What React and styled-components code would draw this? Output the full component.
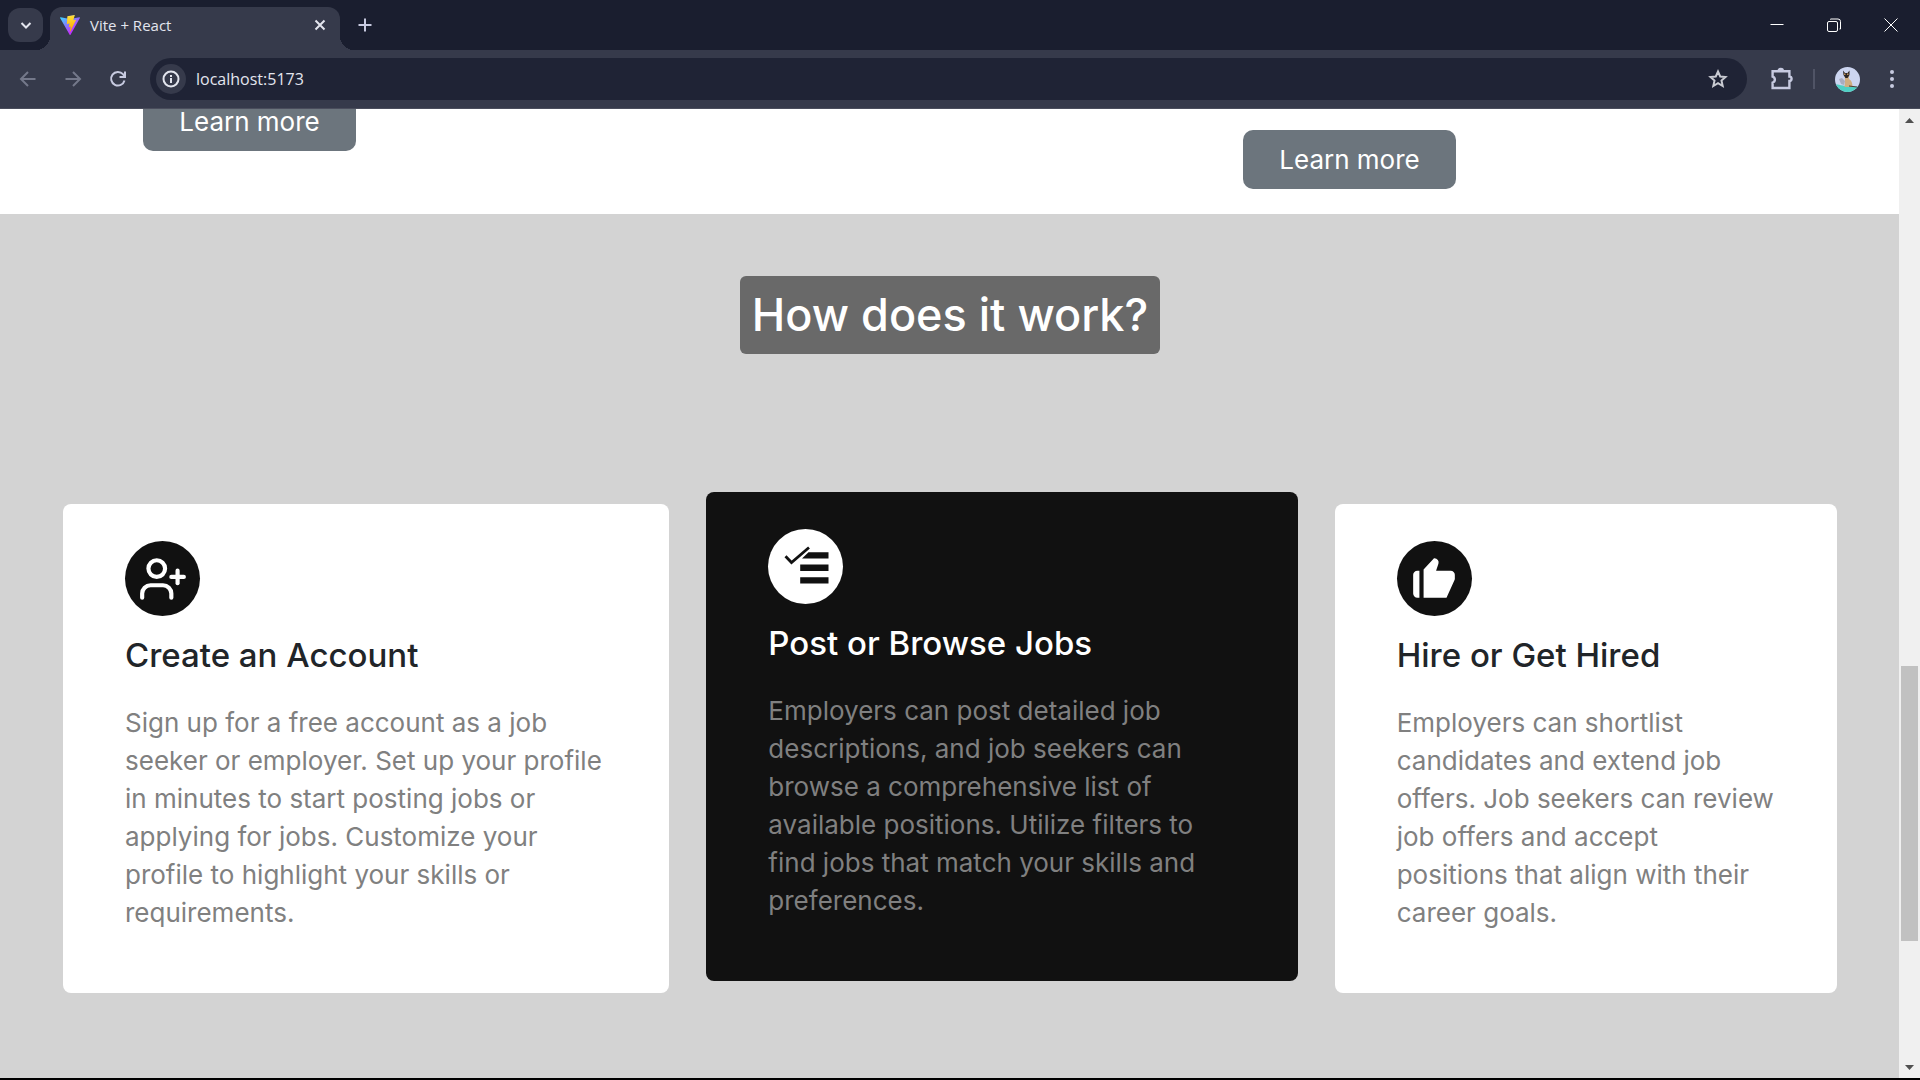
import React from "react";
import styled, { createGlobalStyle, css } from "styled-components";
import { UserPlus } from "lucide-react";
import { BiSolidLike } from "react-icons/bi";

const GlobalStyle = createGlobalStyle`
  *, *::before, *::after { box-sizing: border-box; }
  body { margin: 0; background: #000; }
  button, input { font: inherit; border: 0; margin: 0; padding: 0; }
  h2, h3, p { margin: 0; }
`;

const Window = styled.div`
  display: flex;
  flex-direction: column;
  min-height: 100vh;
  border-bottom: 2px solid #000;
  font-family: "Open Sans", "Noto Sans", sans-serif;
`;

const TabStrip = styled.header`
  display: flex;
  height: 50px;
  background: #1a1e2f;
  color: #e3e5ee;
`;

const TabSearch = styled.button`
  display: grid;
  place-items: center;
  width: 35px;
  height: 34px;
  margin: 8px 7px 0 8px;
  border-radius: 12px;
  background: #363a4b;
  color: #e3e5ee;
`;

const Tab = styled.div`
  position: relative;
  display: flex;
  align-items: center;
  gap: 10px;
  width: 290px;
  height: 43px;
  margin-top: 7px;
  padding: 0 10px;
  padding-bottom: 7px;
  border-radius: 12px 12px 0 0;
  background: #363a4b;
  font-size: 15px;

  &::before, &::after {
    content: "";
    position: absolute;
    bottom: 0;
    width: 14px;
    height: 14px;
  }
  &::before {
    right: 100%;
    background: radial-gradient(circle at 0 0, transparent 14px, #363a4b 14px);
  }
  &::after {
    left: 100%;
    background: radial-gradient(circle at 100% 0, transparent 14px, #363a4b 14px);
  }
`;

const TabTitle = styled.span`
  flex: 1;
`;

const IconButton = styled.button`
  display: grid;
  place-items: center;
  width: ${(p) => p.$size || 20}px;
  height: ${(p) => p.$size || 20}px;
  background: none;
  color: ${(p) => p.$color || "#c7cae0"};
`;

const NewTab = styled.div`
  padding: 10px;
`;

const WindowControls = styled.div`
  display: flex;
  margin-left: auto;
  padding-right: 1px;

  button {
    width: 57px;
    height: 50px;
  }
`;

const Toolbar = styled.nav`
  display: flex;
  align-items: center;
  height: 59px;
  padding-left: 12px;
  border-bottom: 1px solid #4a4d5c;
  background: #363a4b;
`;

const NavButtons = styled.div`
  display: flex;
  gap: 13px;
  margin-right: 16px;
`;

const AddressBar = styled.div`
  display: flex;
  flex: 1;
  align-items: center;
  height: 42px;
  padding: 0 14px 0 6px;
  border-radius: 21px;
  background: #1f2335;
`;

const SiteInfo = styled.button`
  display: grid;
  place-items: center;
  width: 30px;
  height: 30px;
  border-radius: 50%;
  background: #363a4b;
  color: #e3e5ee;
`;

const AddressInput = styled.input`
  flex: 1;
  min-width: 0;
  padding: 0 10px;
  outline: 0;
  background: none;
  color: #e3e5ee;
  font-size: 16px;
`;

const ToolbarEnd = styled.div`
  display: flex;
  align-items: center;
  padding: 0 12px 0 19px;
`;

const Divider = styled.span`
  width: 2px;
  height: 20px;
  margin: 0 19px 0 17px;
  background: #505466;
`;

const MenuWrap = styled.div`
  margin-left: 16px;
`;

const Viewport = styled.div`
  display: flex;
  flex: 1;
`;

const Page = styled.main`
  display: flex;
  flex: 1;
  flex-direction: column;
  min-width: 0;
  overflow: hidden;
  background: #fff;
  font-family: Inter, "Open Sans", sans-serif;
  font-size: 26px;
  line-height: 38px;
`;

const LearnRow = styled.section`
  display: grid;
  grid-template-columns: 1100fr 656fr;
  align-content: end;
  align-items: end;
  justify-items: start;
  height: 105px;
  padding: 0 0 25px 143px;
`;

const LearnButton = styled.button`
  width: 213px;
  height: 59px;
  margin-bottom: ${(p) => (p.$raised ? 38 : 0)}px;
  border-radius: 10px;
  background: #6c757d;
  color: #fff;
`;

const HowSection = styled.section`
  display: flex;
  flex: 1;
  flex-direction: column;
  align-items: center;
  padding: 62px 62px 85px 63px;
  background: #d3d3d3;
`;

const SectionTitle = styled.h2`
  padding: 12px;
  border-radius: 6px;
  background: #696969;
  color: #fff;
  font-size: 45px;
  font-weight: 500;
  line-height: 54px;
`;

const Cards = styled.div`
  display: grid;
  grid-template-columns: 606fr 591fr 502fr;
  gap: 37px;
  width: 100%;
  margin-top: 150px;
`;

const Card = styled.article`
  min-height: 489px;
  padding: 37px 62px 56px;
  border-radius: 8px;
  background: #fff;
  color: #212529;
  ${(p) => p.$featured && css`
    margin: -12px 0 12px;
    background: #111;
    color: #fff;
  `}
`;

const Badge = styled.div`
  display: grid;
  place-items: center;
  width: 75px;
  height: 75px;
  border-radius: 50%;
  background: ${(p) => (p.$featured ? "#fff" : "#111")};
  color: ${(p) => (p.$featured ? "#111" : "#fff")};
`;

const CardTitle = styled.h3`
  margin: 20px 0 30px;
  font-size: 33px;
  font-weight: 500;
  line-height: 38px;
`;

const CardText = styled.p`
  color: #808080;
`;

const Scrollbar = styled.div`
  display: flex;
  flex-direction: column;
  align-items: center;
  width: 21px;
  padding: 9px 0 8px;
  background: #f0f0f0;
`;

const Track = styled.div`
  display: grid;
  grid-template-rows: 543fr 275fr 124fr;
  flex: 1;
  width: 17px;
`;

const Thumb = styled.div`
  grid-row: 2;
  background: #c1c1c1;
`;

const Stroke = ({ size = 20, width = 2, children, ...rest }) => (
  <svg width={size} height={size} viewBox="0 0 20 20" fill="none" stroke="currentColor" strokeWidth={width} aria-hidden="true" {...rest}>
    {children}
  </svg>
);

const ViteLogo = () => (
  <svg width="20" height="20" viewBox="0 0 256 257" aria-hidden="true">
    <defs>
      <linearGradient id="shield" x1="-.828%" x2="57.636%" y1="7.652%" y2="78.411%">
        <stop offset="0%" stopColor="#41D1FF" />
        <stop offset="100%" stopColor="#BD34FE" />
      </linearGradient>
      <linearGradient id="bolt" x1="43.376%" x2="50.316%" y1="2.242%" y2="89.03%">
        <stop offset="0%" stopColor="#FFEA83" />
        <stop offset="8.333%" stopColor="#FFDD35" />
        <stop offset="100%" stopColor="#FFA800" />
      </linearGradient>
    </defs>
    <path fill="url(#shield)" d="M255.153 37.938L134.897 252.976c-2.483 4.44-8.862 4.466-11.382.048L.875 37.958c-2.746-4.814 1.371-10.646 6.827-9.67l120.385 21.517a6.537 6.537 0 0 0 2.322-.004l117.867-21.483c5.438-.991 9.574 4.796 6.877 9.62Z" />
    <path fill="url(#bolt)" d="M185.432.063L96.44 17.501a3.268 3.268 0 0 0-2.634 3.014l-5.474 92.456a3.268 3.268 0 0 0 3.997 3.378l24.777-5.718c2.318-.535 4.413 1.507 3.936 3.838l-7.361 36.047c-.495 2.426 1.782 4.5 4.151 3.78l15.304-4.649c2.372-.72 4.652 1.36 4.15 3.788l-11.698 56.621c-.732 3.542 3.979 5.473 5.943 2.437l1.313-2.028l72.516-144.72c1.215-2.423-.88-5.186-3.54-4.672l-25.505 4.922c-2.396.462-4.435-1.77-3.759-4.114l16.646-57.705c.677-2.35-1.37-4.583-3.769-4.113Z" />
  </svg>
);

const Avatar = () => (
  <svg width="25" height="25" viewBox="0 0 25 25" aria-hidden="true">
    <defs>
      <clipPath id="round"><circle cx="12.5" cy="12.5" r="12.5" /></clipPath>
    </defs>
    <g clipPath="url(#round)">
      <path fill="#ccd5f0" d="M0 0h25v25H0z" />
      <path fill="#a9adc0" d="M4 12l3-1 3 3-1 4-3-1z" />
      <path fill="#4fd0c4" d="M0 17.500c5-.5 9 3 25 2V25H0z" />
      <path fill="#cfae80" d="M9.500 6h4l.5 6c2.500 1.500 3.500 4 3.500 8H9.500l.5-6z" />
      <path fill="#2b2523" d="M8 3.500L10 6h2.500l2-2.500V8L12.500 11h-2L8.500 8z" />
      <path fill="#b98f5c" d="M9 6.500h1.500V8H9zM12 6.500h1.500V8H12z" />
      <path stroke="#4a3a30" strokeWidth="1" d="M14 19l8 1" />
    </g>
  </svg>
);

const ChecklistIcon = () => (
  <svg width="50" height="50" viewBox="0 0 50 50" fill="currentColor" aria-hidden="true">
    <path d="M4.500 14.200l6 6.300L28 5.500" fill="none" stroke="currentColor" strokeWidth="2.800" />
    <path d="M27.500 10.300h20v6.300H21zM19.200 22.600h28.300v6.300H19.200zM19.200 35.200h28.300v6.300H19.200z" />
  </svg>
);

const Arrow = ({ down }) => (
  <svg width="9" height="5" viewBox="0 0 9 5" aria-hidden="true">
    <path fill="#505050" d={down ? "M0 0h9L4.500 5z" : "M0 5h9L4.500 0z"} />
  </svg>
);

const steps = [
  {
    title: "Create an Account",
    icon: <UserPlus size={50} />,
    text: "Sign up for a free account as a job seeker or employer. Set up your profile in minutes to start posting jobs or applying for jobs. Customize your profile to highlight your skills or requirements.",
  },
  {
    title: "Post or Browse Jobs",
    icon: <ChecklistIcon />,
    featured: true,
    text: "Employers can post detailed job descriptions, and job seekers can browse a comprehensive list of available positions. Utilize filters to find jobs that match your skills and preferences.",
  },
  {
    title: "Hire or Get Hired",
    icon: <BiSolidLike size={50} />,
    text: "Employers can shortlist candidates and extend job offers. Job seekers can review job offers and accept positions that align with their career goals.",
  },
];

export default function App() {
  return (
    <>
      <GlobalStyle />
      <Window>
        <TabStrip>
          <TabSearch aria-label="Search tabs">
            <Stroke size={20}><path d="M5.500 8l4.500 4.500L14.500 8" /></Stroke>
          </TabSearch>
          <Tab>
            <ViteLogo />
            <TabTitle>Vite + React</TabTitle>
            <IconButton aria-label="Close tab" $color="#e3e5ee">
              <Stroke><path d="M5.500 5.500l9 9M14.500 5.500l-9 9" /></Stroke>
            </IconButton>
          </Tab>
          <NewTab>
            <IconButton aria-label="New tab" $size={30}>
              <Stroke><path d="M10 3.500v13M3.500 10h13" /></Stroke>
            </IconButton>
          </NewTab>
          <WindowControls>
            <IconButton aria-label="Minimize" $color="#fff">
              <Stroke width={1}><path d="M3.500 9.500h13" /></Stroke>
            </IconButton>
            <IconButton aria-label="Restore" $color="#fff">
              <Stroke width={1}>
                <rect x="3.500" y="6.500" width="10" height="10" rx="1.500" />
                <path d="M6.500 4.500V4h7.500a2.500 2.500 0 0 1 2.500 2.500V14h-1" />
              </Stroke>
            </IconButton>
            <IconButton aria-label="Close" $color="#fff">
              <Stroke width={1}><path d="M3.500 3.500l13 13M16.500 3.500l-13 13" /></Stroke>
            </IconButton>
          </WindowControls>
        </TabStrip>

        <Toolbar>
          <NavButtons>
            <IconButton aria-label="Back" $size={32} $color="#74788a">
              <Stroke width={2}><path d="M17.500 10h-14M10 3l-7 7 7 7" /></Stroke>
            </IconButton>
            <IconButton aria-label="Forward" $size={32} $color="#74788a">
              <Stroke width={2}><path d="M2.500 10h14M10 3l7 7-7 7" /></Stroke>
            </IconButton>
            <IconButton aria-label="Reload" $size={32}>
              <Stroke width={2}><path d="M16.500 11.500A6.800 6.800 0 1 1 15 5.200l2 2M17 2.500v5.500h-5.500" /></Stroke>
            </IconButton>
          </NavButtons>
          <AddressBar>
            <SiteInfo aria-label="Site information">
              <Stroke size={20} width={2}>
                <circle cx="10" cy="10" r="7.500" />
                <path d="M10 9v5M10 6v2" />
              </Stroke>
            </SiteInfo>
            <AddressInput aria-label="Address" defaultValue="localhost:5173" />
            <IconButton aria-label="Bookmark" $size={30} $color="#c9cbd2">
              <Stroke width={2}><path d="M10 2.500l2.200 5 5.300.5-4 3.600 1.200 5.400L10 14.200 5.300 17l1.200-5.400-4-3.600 5.300-.5z" /></Stroke>
            </IconButton>
          </AddressBar>
          <ToolbarEnd>
            <IconButton aria-label="Extensions" $size={30}>
              <Stroke size={24} width={2}>
                <path d="M3 3.500h14v4.500a1.800 1.800 0 0 1 0 3.600V17.500H3v-4.500a2.600 2.600 0 0 0 0-5zM8 3.500a1.800 1.800 0 0 1 3.600 0" />
              </Stroke>
            </IconButton>
            <Divider />
            <IconButton aria-label="Profile" $size={26}><Avatar /></IconButton>
            <MenuWrap>
              <IconButton aria-label="Menu" $size={32}>
                <svg width="20" height="20" fill="currentColor" aria-hidden="true">
                  <circle cx="10" cy="3" r="2" /><circle cx="10" cy="10" r="2" /><circle cx="10" cy="17" r="2" />
                </svg>
              </IconButton>
            </MenuWrap>
          </ToolbarEnd>
        </Toolbar>

        <Viewport>
          <Page>
            <LearnRow>
              <LearnButton $raised>Learn more</LearnButton>
              <LearnButton>Learn more</LearnButton>
            </LearnRow>
            <HowSection>
              <SectionTitle>How does it work?</SectionTitle>
              <Cards>
                {steps.map((s) => (
                  <Card key={s.title} $featured={s.featured}>
                    <Badge $featured={s.featured}>{s.icon}</Badge>
                    <CardTitle>{s.title}</CardTitle>
                    <CardText>{s.text}</CardText>
                  </Card>
                ))}
              </Cards>
            </HowSection>
          </Page>
          <Scrollbar aria-hidden="true">
            <Arrow />
            <Track><Thumb /></Track>
            <Arrow down />
          </Scrollbar>
        </Viewport>
      </Window>
    </>
  );
}
